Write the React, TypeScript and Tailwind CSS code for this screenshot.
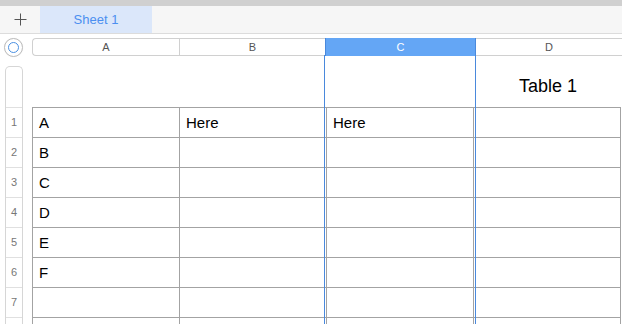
import React from "react";

const ROWS = [
  ["A", "Here", "Here", ""],
  ["B", "", "", ""],
  ["C", "", "", ""],
  ["D", "", "", ""],
  ["E", "", "", ""],
  ["F", "", "", ""],
  ["", "", "", ""],
  ["", "", "", ""],
];

export default function App() {
  return (
    <div className="relative w-[622px] h-[324px] overflow-hidden bg-white font-['Liberation_Sans',Arial,sans-serif]">
      {/* window strip */}
      <div className="h-[6px] bg-[#d0d0d0]" />

      {/* sheet tabs */}
      <div className="flex h-[28px] bg-[#f6f6f6] border-b border-[#dcdcdc]">
        <div className="w-[40px] flex items-center justify-center">
          <svg width="13" height="13" viewBox="0 0 13 13">
            <path d="M6.5 0.5v12M0.5 6.5h12" stroke="#555" strokeWidth="1" />
          </svg>
        </div>
        <div className="w-[112px] flex items-center justify-center bg-[#dbe7fa] text-[13px] text-[#4b8ff0]">
          Sheet 1
        </div>
      </div>

      {/* column headers */}
      <div className="flex items-center mt-[4px] h-[18px]">
        <div className="w-[32px] flex justify-center pr-[6px]">
          <div className="w-[19px] h-[19px] rounded-full border border-[#bdbdbd] bg-white flex items-center justify-center shadow-[0_0_1px_rgba(0,0,0,0.1)]">
            <div className="w-[11px] h-[11px] rounded-full border-[1.5px] border-[#4a90e2]" />
          </div>
        </div>
        <div className="flex flex-1 h-[18px] border-y border-l border-[#d0d0d0] rounded-l-[4px] text-[11px] text-[#555]">
          <div className="w-[147px] flex items-center justify-center border-r border-[#d0d0d0]">A</div>
          <div className="w-[145px] flex items-center justify-center">B</div>
          <div className="w-[151px] flex items-center justify-center bg-[#64a6f5] text-white border-x border-[#4a89dc] -my-px">C</div>
          <div className="flex-1 flex items-center justify-center">D</div>
        </div>
      </div>

      {/* body */}
      <div className="flex">
        {/* row headers */}
        <div className="w-[32px] pl-[5px] pt-[10px]">
          <div className="w-[18px] border-x border-t border-[#d6d6d6] rounded-t-[5px] text-[11px] text-[#777]">
            <div className="h-[41px] border-b border-[#e0e0e0]" />
            {ROWS.map((_, i) => (
              <div key={i} className="h-[30px] flex items-center justify-center border-b border-[#e0e0e0]">
                {i < 7 ? i + 1 : ""}
              </div>
            ))}
          </div>
        </div>

        {/* table */}
        <div className="flex-1">
          <div className="h-[51px] flex items-center">
            <div className="ml-[487px] text-[18px] text-black pt-[9px]">Table 1</div>
          </div>
          <div className="border-t border-l border-[#a3a3a3] w-[589px]">
            {ROWS.map((row, r) => (
              <div key={r} className="flex h-[30px]">
                {row.map((cell, c) => (
                  <div
                    key={c}
                    className="w-[147px] shrink-0 border-r border-b border-[#a3a3a3] text-[15px] text-black pl-[6px] pt-[6px] leading-[18px]"
                  >
                    {cell}
                  </div>
                ))}
              </div>
            ))}
          </div>
        </div>
      </div>

      {/* selected column C outline */}
      <div className="absolute left-[324px] top-[55px] bottom-0 w-px bg-[#4a89dc]" />
      <div className="absolute left-[475px] top-[55px] bottom-0 w-px bg-[#4a89dc]" />
    </div>
  );
}
